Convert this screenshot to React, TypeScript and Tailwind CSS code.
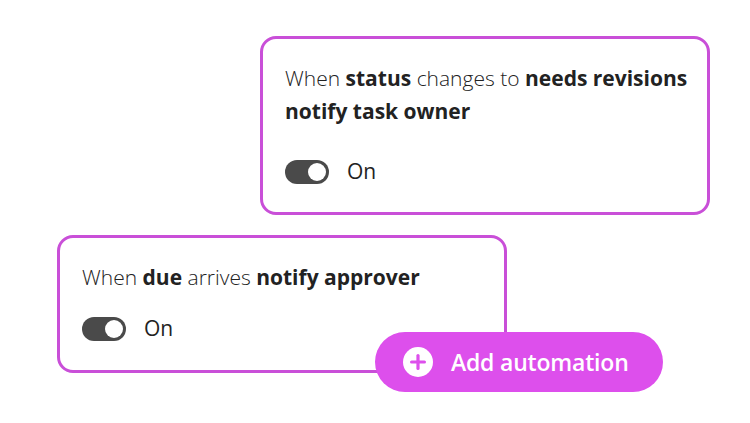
import { Plus } from "lucide-react";

function Toggle() {
  return (
    <div className="flex h-[24px] w-[44px] items-center justify-end rounded-full bg-[#4a4a4a] pr-[3px]">
      <div className="h-[18px] w-[18px] rounded-full bg-white" />
    </div>
  );
}

function ToggleRow() {
  return (
    <div className="flex items-center gap-[18px]">
      <Toggle />
      <span className="text-[21px] font-normal text-[#222]">On</span>
    </div>
  );
}

export default function App() {
  return (
    <div
      className="relative h-[423px] w-[750px] overflow-hidden bg-white text-[#222]"
      style={{ fontFamily: "'Open Sans', 'Noto Sans', sans-serif" }}
    >
      <div className="flex flex-col">
        {/* first rule */}
        <div className="ml-[260px] mt-[36px] h-[179px] w-[450px] rounded-[16px] border-[3px] border-[#c94fd8] pl-[22px] pr-[8px] pt-[23px]">
          <p className="whitespace-nowrap text-[21px] leading-[33px]">
            <span className="font-light">When</span> <span className="font-bold">status</span>{" "}
            <span className="font-light">changes to</span> <span className="font-bold">needs revisions</span>
            <br />
            <span className="font-bold">notify task owner</span>
          </p>
          <div className="mt-[28px]">
            <ToggleRow />
          </div>
        </div>

        {/* second rule, with the add button over its corner */}
        <div className="relative ml-[57px] mt-[20px] h-[138px] w-[450px] rounded-[16px] border-[3px] border-[#c94fd8] px-[22px] pt-[23px]">
          <p className="text-[21px] leading-[33px]">
            <span className="font-light">When</span> <span className="font-bold">due</span>{" "}
            <span className="font-light">arrives</span> <span className="font-bold">notify approver</span>
          </p>
          <div className="mt-[19px]">
            <ToggleRow />
          </div>

          <button
            type="button"
            className="absolute left-[315px] top-[94px] flex h-[60px] w-[288px] items-center gap-[18px] rounded-full bg-[#dd4fec] pl-[28px] text-white"
          >
            <span className="flex h-[30px] w-[30px] items-center justify-center rounded-full bg-white">
              <Plus size={22} strokeWidth={3.5} color="#dd4fec" />
            </span>
            <span className="text-[23px] font-semibold tracking-[-0.2px]">Add automation</span>
          </button>
        </div>
      </div>
    </div>
  );
}
